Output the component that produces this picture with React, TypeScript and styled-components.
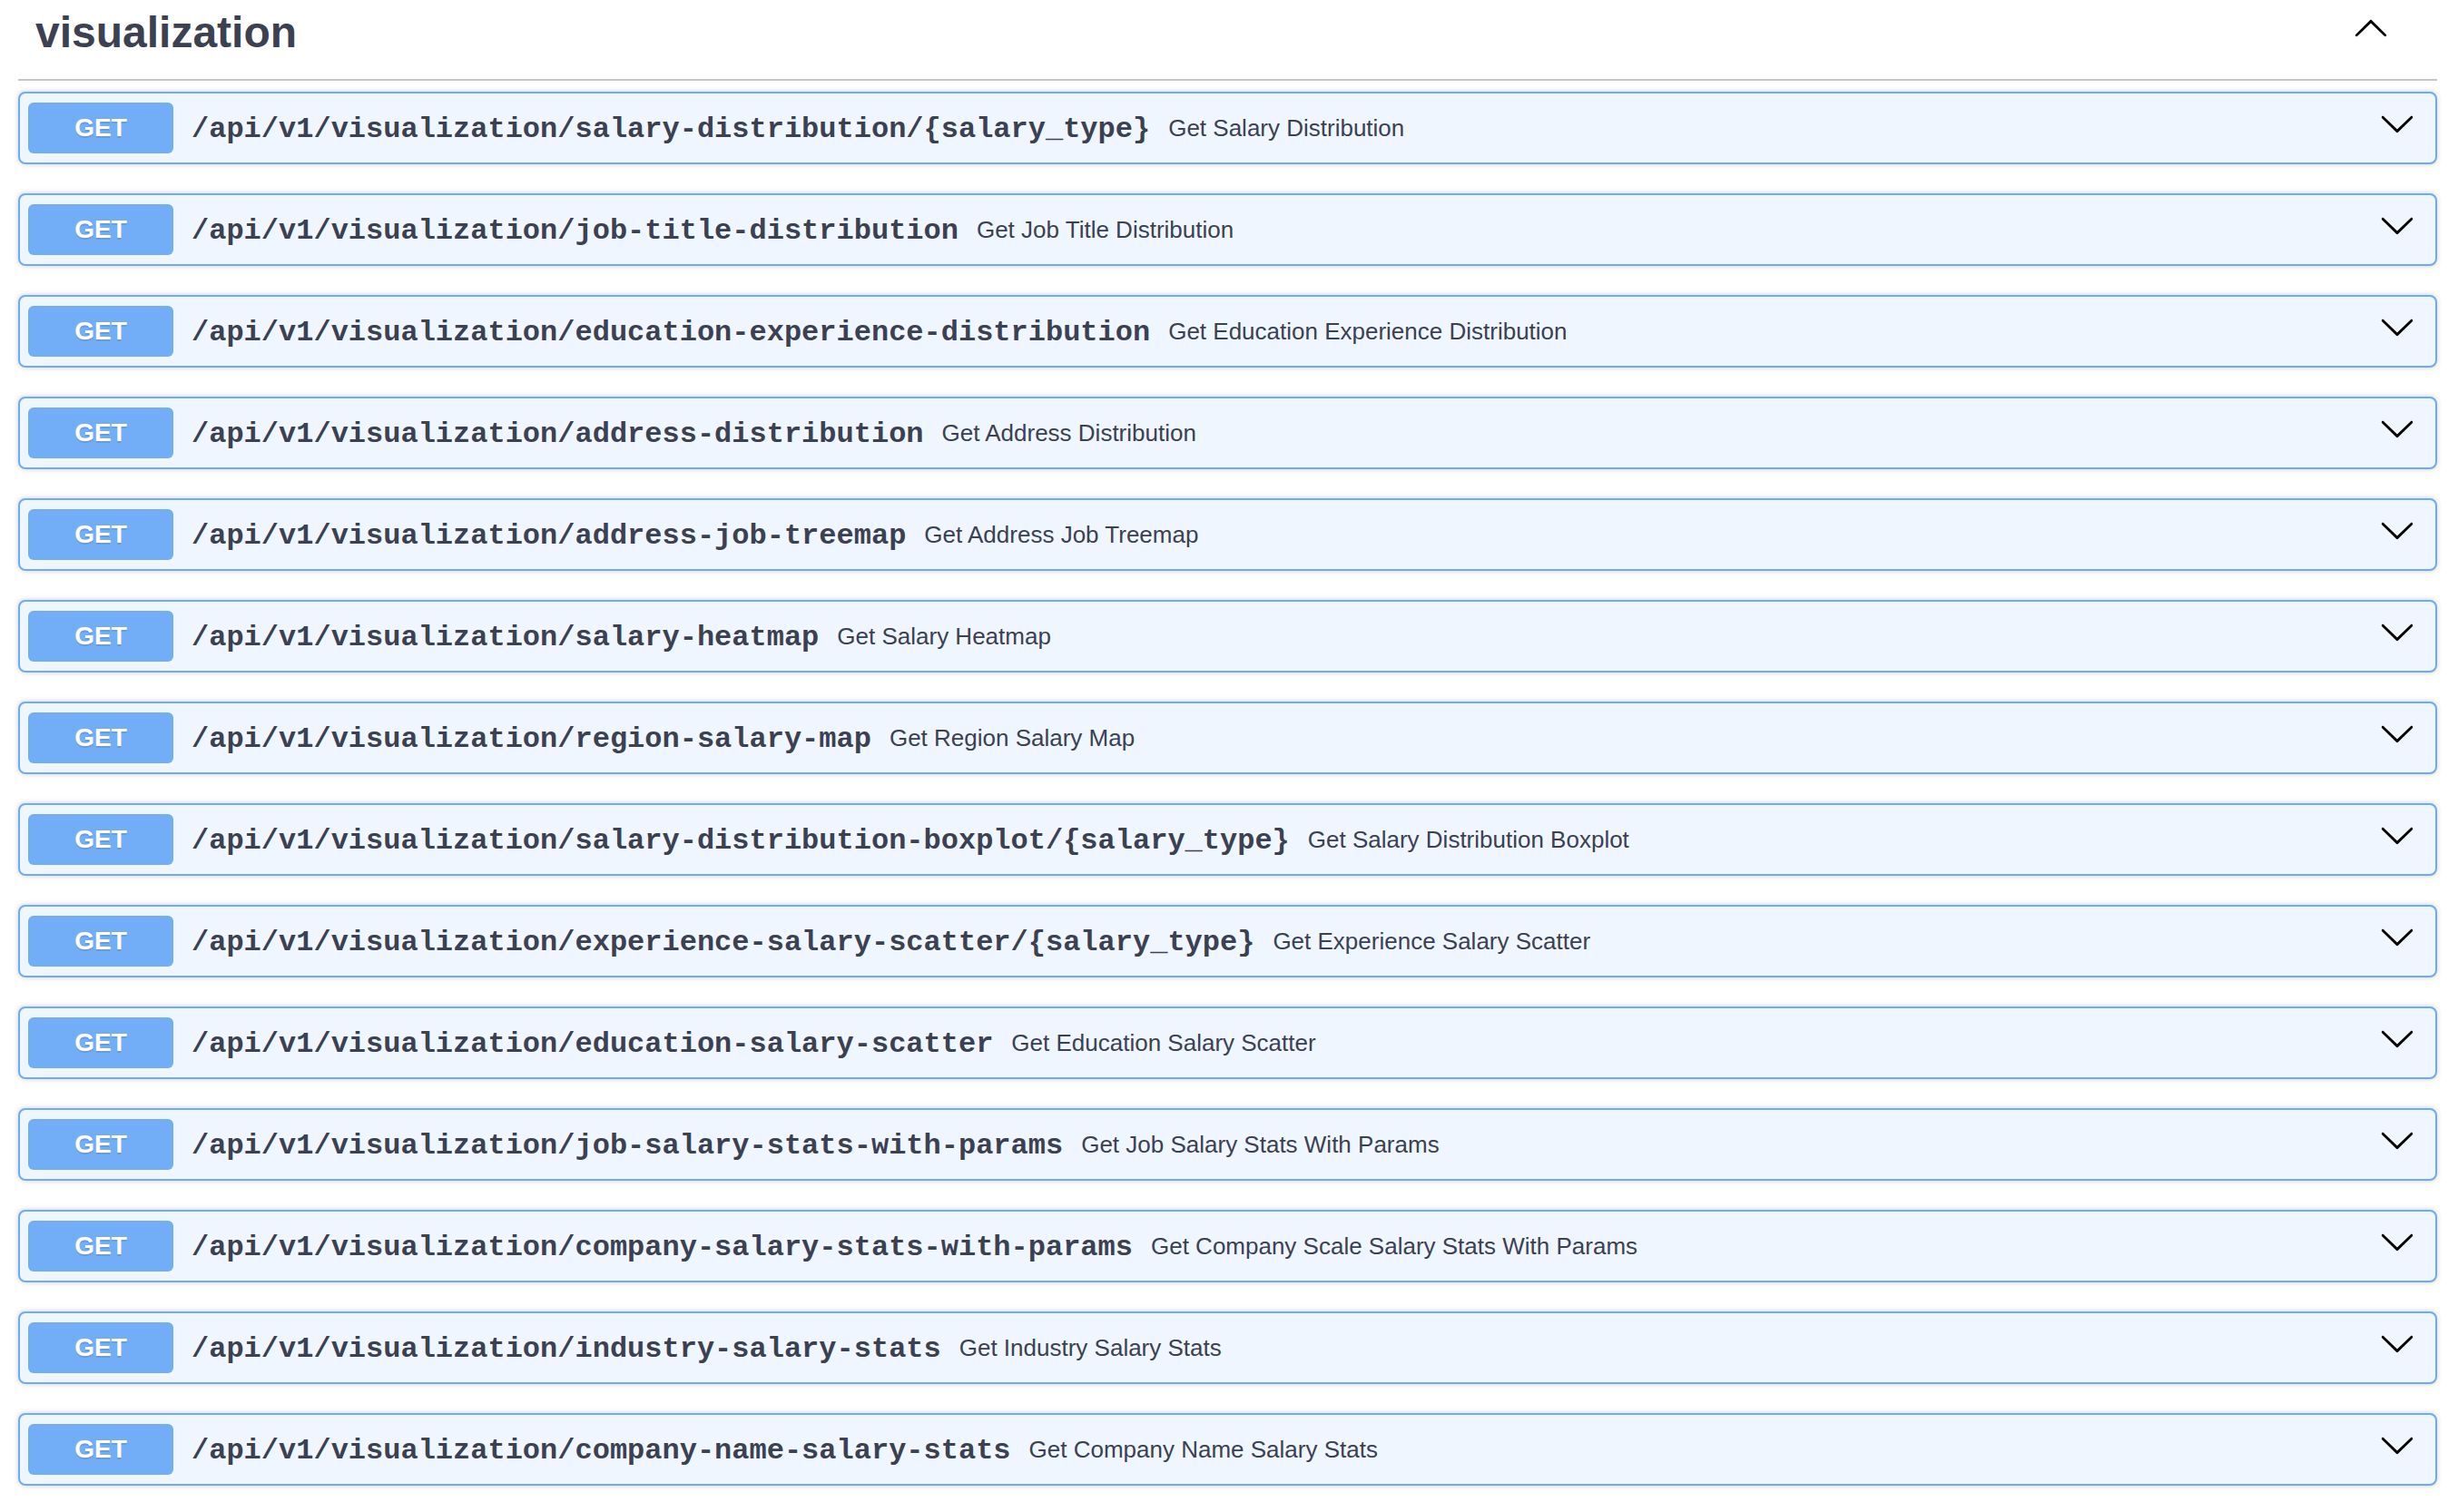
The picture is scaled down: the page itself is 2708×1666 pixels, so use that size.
import React from "react";
import styled, { createGlobalStyle } from "styled-components";

const GlobalStyle = createGlobalStyle`
  html, body {
    margin: 0;
    padding: 0;
    background: #ffffff;
  }
  body {
    font-family: "Liberation Sans", Arial, sans-serif;
    color: #3b4151;
  }
`;

const Page = styled.div`
  padding: 0 23px 0 20px;
`;

const TagHeader = styled.div`
  display: flex;
  align-items: center;
  padding: 8px 0 23px 19px;
  border-bottom: 2px solid #c5c6cb;
  margin-bottom: 12px;
`;

const TagTitle = styled.h3`
  flex: 1 1 auto;
  margin: 0;
  font-family: "Liberation Sans", Arial, sans-serif;
  font-size: 48px;
  line-height: 56px;
  font-weight: 700;
  color: #3b4151;
`;

const TagArrow = styled.svg`
  width: 40px;
  height: 40px;
  margin: 0 53px 12px 0;
  flex: 0 0 auto;
`;

const OpBlock = styled.div`
  margin: 0 0 32px;
  border: 2px solid #6eaaf6;
  border-radius: 8px;
  background: #eff6ff;
  box-shadow: 0 0 6px rgba(0, 0, 0, 0.19);
`;

const Summary = styled.div`
  display: flex;
  align-items: center;
  padding: 10px 22px 10px 9px;
`;

const Method = styled.span`
  min-width: 160px;
  padding: 12px 0;
  text-align: center;
  border-radius: 6px;
  background: #72adf7;
  color: #ffffff;
  font-family: "Liberation Sans", Arial, sans-serif;
  font-size: 28px;
  line-height: 32px;
  font-weight: 700;
  text-shadow: 0 2px 0 rgba(0, 0, 0, 0.1);
`;

const Path = styled.span`
  display: flex;
  align-items: center;
  padding: 3px 20px 0;
  font-family: "Liberation Mono", "Courier New", monospace;
  font-size: 32px;
  font-weight: 700;
  color: #3b4151;
  white-space: nowrap;
`;

const Description = styled.span`
  flex: 1 1 auto;
  padding-top: 1px;
  font-family: "Liberation Sans", Arial, sans-serif;
  font-size: 26px;
  color: #3b4151;
`;

const RowArrow = styled.svg`
  width: 40px;
  height: 40px;
  flex: 0 0 auto;
  margin-bottom: 10px;
`;

const endpoints: [string, string][] = [
  ["/api/v1/visualization/salary-distribution/{salary_type}", "Get Salary Distribution"],
  ["/api/v1/visualization/job-title-distribution", "Get Job Title Distribution"],
  ["/api/v1/visualization/education-experience-distribution", "Get Education Experience Distribution"],
  ["/api/v1/visualization/address-distribution", "Get Address Distribution"],
  ["/api/v1/visualization/address-job-treemap", "Get Address Job Treemap"],
  ["/api/v1/visualization/salary-heatmap", "Get Salary Heatmap"],
  ["/api/v1/visualization/region-salary-map", "Get Region Salary Map"],
  ["/api/v1/visualization/salary-distribution-boxplot/{salary_type}", "Get Salary Distribution Boxplot"],
  ["/api/v1/visualization/experience-salary-scatter/{salary_type}", "Get Experience Salary Scatter"],
  ["/api/v1/visualization/education-salary-scatter", "Get Education Salary Scatter"],
  ["/api/v1/visualization/job-salary-stats-with-params", "Get Job Salary Stats With Params"],
  ["/api/v1/visualization/company-salary-stats-with-params", "Get Company Scale Salary Stats With Params"],
  ["/api/v1/visualization/industry-salary-stats", "Get Industry Salary Stats"],
  ["/api/v1/visualization/company-name-salary-stats", "Get Company Name Salary Stats"],
];

const UpArrow = () => (
  <TagArrow viewBox="0 0 20 20">
    <path
      fill="#000"
      d="M17.418 14.908c.272.268.709.268.979 0s.27-.701 0-.969l-7.908-7.83c-.27-.268-.707-.268-.979 0l-7.908 7.83c-.27.268-.27.701 0 .969.271.268.709.268.979 0L10 7.767l7.418 7.141z"
    />
  </TagArrow>
);

const DownArrow = () => (
  <RowArrow viewBox="0 0 20 20">
    <path
      fill="#000"
      d="M17.418 6.109c.272-.268.709-.268.979 0s.271.701 0 .969l-7.908 7.83c-.27.268-.707.268-.979 0l-7.908-7.830c-.27-.268-.27-.701 0-.969.271-.268.709-.268.979 0L10 13.25l7.418-7.141z"
    />
  </RowArrow>
);

export default function App() {
  return (
    <>
      <GlobalStyle />
      <Page>
        <TagHeader>
          <TagTitle>visualization</TagTitle>
          <UpArrow />
        </TagHeader>
        {endpoints.map(([path, desc]) => (
          <OpBlock key={path}>
            <Summary>
              <Method>GET</Method>
              <Path>{path}</Path>
              <Description>{desc}</Description>
              <DownArrow />
            </Summary>
          </OpBlock>
        ))}
      </Page>
    </>
  );
}
